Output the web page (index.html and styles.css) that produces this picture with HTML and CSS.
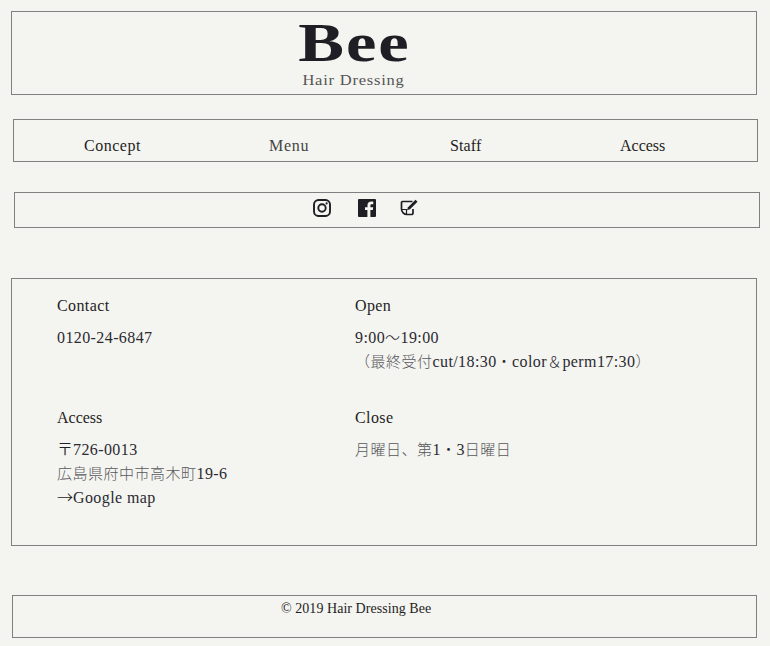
FILE: index.html
```html
<!DOCTYPE html>
<html lang="ja">
<head>
<meta charset="utf-8">
<title>Bee Hair Dressing</title>
<link rel="stylesheet" href="styles.css">
</head>
<body>
<header class="box logo-box">
  <div class="logo">
    <div class="logo-name">Bee</div>
    <div class="logo-sub">Hair Dressing</div>
  </div>
</header>
<nav class="box nav-box">
  <a class="nav-link nav-concept">Concept</a>
  <a class="nav-link nav-menu">Menu</a>
  <a class="nav-link nav-staff">Staff</a>
  <a class="nav-link nav-access">Access</a>
</nav>
<div class="box social-box">
  <svg class="ico" viewBox="0 0 18 18" width="18" height="18"><rect x="1" y="1" width="16" height="16" rx="4.500" fill="none" stroke="#1e1e24" stroke-width="1.900"/><circle cx="9" cy="9" r="3.700" fill="none" stroke="#1e1e24" stroke-width="1.900"/><circle cx="13.600" cy="4.400" r="1.100" fill="#1e1e24"/></svg>
  <svg class="ico ico-fb" viewBox="0 0 18 18" width="18" height="18"><path fill="#1e1e24" d="M1 0h16a1 1 0 0 1 1 1v16a1 1 0 0 1-1 1h-4.600v-7h2.400l.4-2.800h-2.800V6.500c0-.8.3-1.300 1.400-1.300h1.500V2.700c-.3 0-1.100-.1-2.100-.1-2.200 0-3.700 1.300-3.700 3.700v1.900H7v2.800h2.400v7H1a1 1 0 0 1-1-1V1a1 1 0 0 1 1-1z"/></svg>
  <svg class="ico ico-note" viewBox="0 0 18 18" width="18" height="18"><path fill="none" stroke="#1e1e24" stroke-width="1.700" stroke-linejoin="round" d="M12.500 2.500H2.500a1 1 0 0 0-1 1V10c0 3 2.500 5.500 5.500 5.500h4.500a1.500 1.500 0 0 0 1.500-1.500V10"/><path fill="none" stroke="#1e1e24" stroke-width="1.200" stroke-linejoin="round" d="M2 10.500h4.500v4.500"/><path fill="#1e1e24" d="M15.500.8l2 2-7.500 7.500-3 1 1-3z"/></svg>
</div>
<section class="box info-box">
  <div class="info-cell">
    <h2 class="info-title">Contact</h2>
    <p class="info-text">0120-24-6847</p>
  </div>
  <div class="info-cell">
    <h2 class="info-title">Open</h2>
    <p class="info-text">9:00<span class="ja ja-sym">～</span>19:00<br><span class="ja">（最終受付</span>cut/18:30<span class="ja ja-sym">・</span>color<span class="ja ja-sym">＆</span>perm17:30<span class="ja">）</span></p>
  </div>
  <div class="info-cell">
    <h2 class="info-title info-title-tight">Access</h2>
    <p class="info-text"><span class="ja ja-dark">〒</span>726-0013<br><span class="ja">広島県府中市高木町</span>19-6<br><span class="ja ja-dark">→</span>Google map</p>
  </div>
  <div class="info-cell">
    <h2 class="info-title">Close</h2>
    <p class="info-text"><span class="ja">月曜日、第</span>1<span class="ja ja-sym">・</span>3<span class="ja">日曜日</span></p>
  </div>
</section>
<footer class="box footer-box">© 2019 Hair Dressing Bee</footer>
</body>
</html>
```
FILE: styles.css
```css
html, body { margin: 0; padding: 0; }
body {
  background: #f4f4f0;
  color: #1e1e24;
  font-family: "Liberation Serif", "Noto Sans CJK JP", serif;
  font-size: 16px;
  height: 646px;
  overflow: hidden;
  padding-top: 11px;
  box-sizing: border-box;
}
.box { border: 1px solid #808080; box-sizing: border-box; }
.logo-box { width: 746px; height: 84px; margin-left: 11px; }
.logo { width: 113px; margin-left: 286px; text-align: center; }
.logo-name { font-size: 54px; font-weight: 700; line-height: 60px; letter-spacing: 1.5px; margin-top: 1px; white-space: nowrap; transform: scaleX(1.27); transform-origin: center; }
.logo-sub { font-size: 15px; line-height: 17px; letter-spacing: 0.7px; color: #555; margin-top: -1px; margin-left: -2px; white-space: nowrap; transform: scaleX(1.1); transform-origin: center; }
.nav-box { width: 745px; height: 43px; margin: 24px 0 0 13px; display: flex; padding-top: 17px; font-size: 16px; line-height: 18px; letter-spacing: 0.5px; }
.nav-link { display: block; color: #1e1e24; }
.nav-concept { margin-left: 70px; width: 185px; }
.nav-menu { width: 181px; color: #444; letter-spacing: 0.7px; }
.nav-staff { width: 170px; letter-spacing: 0.1px; }
.nav-access { letter-spacing: 0; }
.social-box { width: 746px; height: 36px; margin: 30px 0 0 14px; display: flex; padding: 6px 0 0 298px; }
.ico { display: block; flex: none; }
.ico-fb { margin-left: 27px; }
.ico-note { margin-left: 24px; }
.info-box { width: 746px; height: 268px; margin: 50px 0 0 11px; padding: 16px 0 0 45px; display: grid; grid-template-columns: 298px 1fr; grid-template-rows: 112px auto; }
.info-title { font-size: 16px; font-weight: 400; line-height: 22px; letter-spacing: 0.4px; margin: 0 0 9px; }
.info-title-tight { letter-spacing: 0; }
.info-text { font-size: 16px; line-height: 24px; letter-spacing: 0.4px; margin: 0; color: #2a2a30; }
.ja { font-size: 15px; line-height: 0; letter-spacing: 0.5px; color: #58585c; font-weight: 300; }
.ja-sym { color: #2a2a30; }
.ja-dark { font-size: 16px; letter-spacing: 0; color: #1e1e24; font-family: "Noto Sans CJK JP", sans-serif; }
.footer-box { width: 745px; height: 43px; margin: 49px 0 0 12px; padding: 5px 0 0 268px; font-size: 14px; line-height: 16px; letter-spacing: 0.05px; }
```
